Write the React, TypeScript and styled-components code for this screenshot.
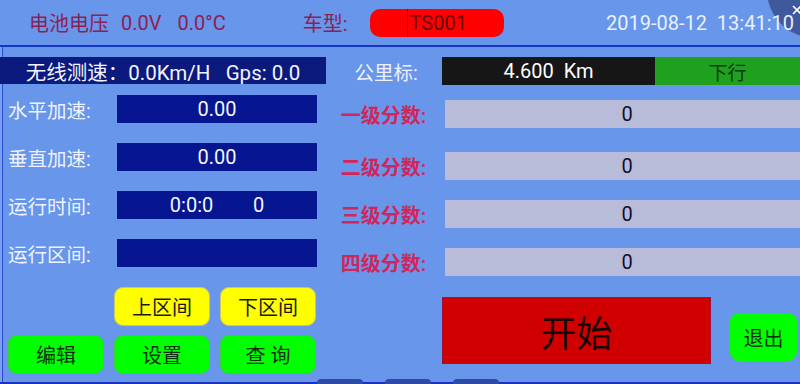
import React from "react";
import styled, { createGlobalStyle } from "styled-components";

const GlobalStyle = createGlobalStyle`
  html, body {
    margin: 0;
    padding: 0;
    background: #6896eb;
  }
  body {
    font-family: Roboto, "Noto Sans CJK SC", sans-serif;
  }
`;

const Screen = styled.div`
  position: relative;
  width: 800px;
  height: 384px;
  overflow: hidden;
  display: flex;
  flex-direction: column;
  background: #6896eb;
  font-family: Roboto, "Noto Sans CJK SC", sans-serif;
`;

const Header = styled.header`
  position: relative;
  z-index: 1;
  height: 45px;
  flex: none;
  display: flex;
  align-items: center;
  padding-left: 29px;
  border-bottom: 2px solid #1636c8;
  box-sizing: content-box;
`;

const HeadText = styled.span<{ $ml?: number }>`
  font-size: 20px;
  color: #8c2152;
  margin-left: ${(p) => p.$ml ?? 0}px;
  white-space: pre;
`;

const ModelPill = styled.div`
  margin-left: 22px;
  width: 134px;
  height: 28px;
  border-radius: 10px;
  background: #ff0000;
  display: flex;
  align-items: center;
  padding-left: 37px;
  box-sizing: border-box;
  font-size: 20px;
  color: #6a0606;
`;

const Cursor = styled.span`
  display: inline-block;
  width: 1px;
  height: 28px;
  background: #7a0000;
  margin-right: 2px;
`;

const DateText = styled.span`
  margin-left: auto;
  margin-right: 6px;
  font-size: 20px;
  color: #e9f0ff;
  white-space: pre;
`;

const Bubble = styled.div`
  position: absolute;
  top: -58px;
  left: 767px;
  width: 96px;
  height: 96px;
  border-radius: 50%;
  background: #40599c;
`;

const CloseIcon = styled.svg`
  position: absolute;
  z-index: 2;
  left: 792px;
  top: 5px;
`;

const Body = styled.main`
  flex: 1;
  display: grid;
  grid-template-columns: 330px 470px;
  background: linear-gradient(
    to right,
    #7aa2f2 0 2px,
    #2a4ad0 2px 3px,
    transparent 3px
  );
`;

const Column = styled.section`
  display: flex;
  flex-direction: column;
  min-width: 0;
`;

const SpeedBar = styled.div`
  margin-top: 10px;
  width: 326px;
  height: 27px;
  background: #0b1a7c;
  color: #f2f5ff;
  font-size: 20.5px;
  display: flex;
  align-items: center;
  justify-content: center;
  white-space: pre;
`;

const FieldList = styled.div`
  margin-top: 11px;
  display: flex;
  flex-direction: column;
  gap: 20px;
`;

const FieldRow = styled.div`
  display: flex;
  align-items: center;
  height: 28px;
`;

const FieldLabel = styled.span`
  width: 117px;
  padding-left: 8px;
  box-sizing: border-box;
  font-size: 19.5px;
  color: #eef2ff;
`;

const ValueBox = styled.div`
  width: 200px;
  height: 28px;
  background: #061690;
  color: #f2f5ff;
  font-size: 20px;
  display: flex;
  align-items: center;
  justify-content: center;
  white-space: pre;
`;

const ButtonGrid = styled.div<{ $mt: number }>`
  margin-top: ${(p) => p.$mt}px;
  padding-left: 8px;
  display: grid;
  grid-template-columns: repeat(3, 96px);
  column-gap: 10px;
`;

const Pad = styled.button<{ $tone: "yellow" | "green"; $col?: number }>`
  grid-column: ${(p) => p.$col ?? "auto"};
  height: 39px;
  border-radius: 9px;
  border: 1px solid ${(p) => (p.$tone === "yellow" ? "#c9c66a" : "#3ccc3c")};
  background: ${(p) => (p.$tone === "yellow" ? "#ffff00" : "#00ff00")};
  color: ${(p) => (p.$tone === "yellow" ? "#1a1a10" : "#0c2f0c")};
  font-family: Roboto, "Noto Sans CJK SC", sans-serif;
  font-size: 20px;
  padding: 0;
  white-space: pre;
  display: flex;
  align-items: center;
  justify-content: center;
`;

const KmRow = styled.div`
  margin-top: 10px;
  height: 28px;
  display: flex;
  align-items: center;
`;

const RightLabel = styled.span<{ $red?: boolean; $w: number }>`
  flex: none;
  width: ${(p) => p.$w}px;
  font-size: ${(p) => (p.$red ? 20 : 19.5)}px;
  font-weight: ${(p) => (p.$red ? 600 : 400)};
  text-align: center;
  color: ${(p) => (p.$red ? "#d2255a" : "#eef2ff")};
  padding-right: ${(p) => (p.$red ? 8 : 0)}px;
  box-sizing: border-box;
`;

const KmBox = styled.div`
  flex: none;
  width: 213px;
  height: 28px;
  background: #161616;
  color: #ffffff;
  font-size: 20px;
  display: flex;
  align-items: center;
  justify-content: center;
  white-space: pre;
`;

const DirBox = styled.div`
  flex: 1;
  height: 28px;
  background: #1fa11f;
  color: #0b3a10;
  font-size: 19px;
  display: flex;
  align-items: center;
  justify-content: center;
`;

const ScoreRow = styled.div<{ $mt: number }>`
  margin-top: ${(p) => p.$mt}px;
  height: 28px;
  display: flex;
  align-items: center;
`;

const ScoreBox = styled.div`
  flex: none;
  width: 364px;
  height: 28px;
  background: #b8bcd8;
  color: #0e1030;
  font-size: 20px;
  display: flex;
  align-items: center;
  justify-content: center;
`;

const ActionRow = styled.div`
  margin-top: 21px;
  padding-left: 112px;
  display: flex;
  align-items: flex-start;
`;

const StartButton = styled.button`
  width: 269px;
  height: 67px;
  background: #d10000;
  border: 1px solid #a0103a;
  color: #1a0505;
  font-family: Roboto, "Noto Sans CJK SC", sans-serif;
  font-size: 36px;
  padding: 0;
  display: flex;
  align-items: center;
  justify-content: center;
`;

const ExitButton = styled.button`
  margin-left: 19px;
  margin-top: 16px;
  width: 67px;
  height: 48px;
  border-radius: 9px;
  border: none;
  background: #00ff00;
  color: #0c2f0c;
  font-family: Roboto, "Noto Sans CJK SC", sans-serif;
  font-size: 20px;
  padding: 0;
  display: flex;
  align-items: center;
  justify-content: center;
`;

const NavStrip = styled.footer`
  position: absolute;
  left: 0;
  right: 0;
  bottom: 0;
  height: 5px;
  display: flex;
  align-items: flex-start;
  gap: 22px;
  padding-left: 317px;
  background: linear-gradient(to bottom, transparent 0 3px, #1a34c0 3px);
`;

const NavTab = styled.span`
  width: 46px;
  height: 5px;
  border-radius: 4px 4px 0 0;
  background: #2c4aa6;
`;

const fields = [
  { label: "水平加速:", value: "0.00" },
  { label: "垂直加速:", value: "0.00" },
  { label: "运行时间:", value: "0:0:0        0" },
  { label: "运行区间:", value: "" },
];

const scores = [
  { label: "一级分数:", mt: 15 },
  { label: "二级分数:", mt: 24 },
  { label: "三级分数:", mt: 20 },
  { label: "四级分数:", mt: 20 },
];

export default function App() {
  return (
    <>
      <GlobalStyle />
      <Screen>
        <Bubble />
        <CloseIcon width="10" height="10" viewBox="0 0 10 10">
          <path d="M1 1 L9 9 M9 1 L1 9" stroke="#ffffff" strokeWidth="1.6" fill="none" />
        </CloseIcon>
        <Header>
          <HeadText>电池电压</HeadText>
          <HeadText $ml={12}>0.0V</HeadText>
          <HeadText $ml={16}>0.0°C</HeadText>
          <HeadText $ml={77}>车型:</HeadText>
          <ModelPill>
            <Cursor />
            TS001
          </ModelPill>
          <DateText>2019-08-12  13:41:10</DateText>
        </Header>
        <Body>
          <Column>
            <SpeedBar>无线测速：0.0Km/H   Gps: 0.0</SpeedBar>
            <FieldList>
              {fields.map((f) => (
                <FieldRow key={f.label}>
                  <FieldLabel>{f.label}</FieldLabel>
                  <ValueBox>{f.value}</ValueBox>
                </FieldRow>
              ))}
            </FieldList>
            <ButtonGrid $mt={20}>
              <Pad $tone="yellow" $col={2}>上区间</Pad>
              <Pad $tone="yellow" $col={3}>下区间</Pad>
            </ButtonGrid>
            <ButtonGrid $mt={9}>
              <Pad $tone="green">编辑</Pad>
              <Pad $tone="green">设置</Pad>
              <Pad $tone="green">查 询</Pad>
            </ButtonGrid>
          </Column>
          <Column>
            <KmRow>
              <RightLabel $w={112}>公里标:</RightLabel>
              <KmBox>4.600  Km</KmBox>
              <DirBox>下行</DirBox>
            </KmRow>
            {scores.map((s) => (
              <ScoreRow key={s.label} $mt={s.mt}>
                <RightLabel $red $w={115}>{s.label}</RightLabel>
                <ScoreBox>0</ScoreBox>
              </ScoreRow>
            ))}
            <ActionRow>
              <StartButton>开始</StartButton>
              <ExitButton>退出</ExitButton>
            </ActionRow>
          </Column>
        </Body>
        <NavStrip>
          <NavTab />
          <NavTab />
          <NavTab />
        </NavStrip>
      </Screen>
    </>
  );
}
